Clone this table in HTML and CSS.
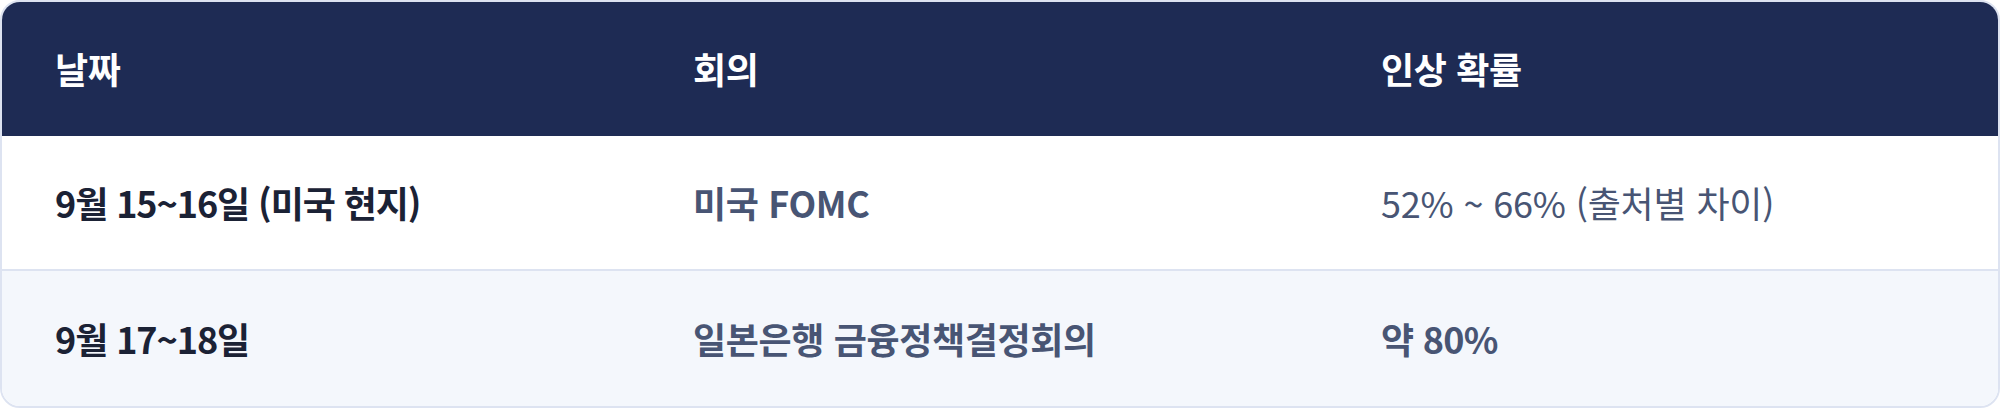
FILE: index.html
```html
<!DOCTYPE html>
<html lang="ko">
<head>
<meta charset="utf-8">
<title>금리 인상 확률</title>
<link rel="stylesheet" href="styles.css">
</head>
<body>
<div class="card">
  <table class="tbl">
    <thead>
      <tr>
        <th class="c1">날짜</th>
        <th class="c2">회의</th>
        <th class="c3">인상 확률</th>
      </tr>
    </thead>
    <tbody>
      <tr class="row">
        <td class="date">9월 15~16일 (미국 현지)</td>
        <td class="meet">미국 FOMC</td>
        <td class="prob">52% ~ 66% (출처별 차이)</td>
      </tr>
      <tr class="row alt">
        <td class="date">9월 17~18일</td>
        <td class="meet">일본은행 금융정책결정회의</td>
        <td class="prob strong">약 80%</td>
      </tr>
    </tbody>
  </table>
</div>
</body>
</html>
```

FILE: styles.css
```css
html, body {
  margin: 0;
  padding: 0;
  background: #ffffff;
}

body {
  font-family: "Noto Sans CJK KR", "Noto Sans", sans-serif;
}

.card {
  width: 2000px;
  box-sizing: border-box;
  border: 2px solid #dde3f1;
  border-radius: 20px;
  overflow: hidden;
}

.tbl {
  width: 100%;
  border-collapse: collapse;
  table-layout: fixed;
}

.c1 { width: 638px; }
.c2 { width: 688px; }

.tbl th,
.tbl td {
  height: 134px;
  padding: 0 0 0 53px;
  box-sizing: border-box;
  text-align: left;
  vertical-align: middle;
  font-size: 36px;
  line-height: 1.2;
  white-space: nowrap;
}

.tbl th {
  background: #1e2b54;
  color: #ffffff;
  font-weight: 700;
  letter-spacing: -0.01em;
}

.row td {
  background: #ffffff;
}

.row.alt td {
  background: #f4f7fc;
  border-top: 2px solid #dde3f1;
  height: 136px;
}

.tbl td.date {
  color: #1b2235;
  font-weight: 700;
  letter-spacing: -0.03em;
}

.tbl td.meet {
  color: #485574;
  font-weight: 700;
  letter-spacing: -0.01em;
}

.tbl td.prob {
  color: #485574;
  font-weight: 400;
  letter-spacing: -0.005em;
}

.tbl td.prob.strong {
  font-weight: 700;
  letter-spacing: -0.02em;
}
```
